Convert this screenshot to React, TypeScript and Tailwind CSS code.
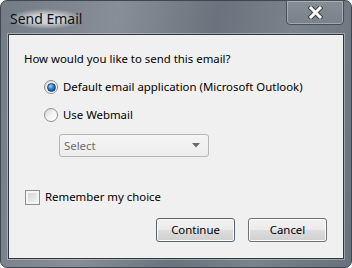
import { type ReactNode } from 'react';

const font = { fontFamily: '"Noto Sans", "Open Sans", sans-serif' };

function Radio({ checked }: { checked?: boolean }) {
  return (
    <span className="relative flex h-[14px] w-[14px] shrink-0 items-center justify-center rounded-full border border-[#8e8f8f] bg-gradient-to-br from-[#d6d6d6] via-[#f4f4f4] to-[#ffffff]">
      {checked && (
        <span className="h-[9px] w-[9px] rounded-full border border-[#1a3f6b] bg-[radial-gradient(circle_at_35%_30%,#9fd4ff_0%,#2a7fd0_45%,#0b3f80_100%)]" />
      )}
    </span>
  );
}

function Button({ children, primary }: { children: ReactNode; primary?: boolean }) {
  return (
    <button
      className={
        'flex h-[24px] w-[79px] items-center justify-center rounded-[3px] border text-black bg-[linear-gradient(to_bottom,#f2f2f2_0%,#ebebeb_48%,#dddddd_52%,#cfcfcf_100%)] shadow-[inset_0_0_0_1px_#fcfcfc] ' +
        (primary ? 'border-[#5a6470]' : 'border-[#707070]')
      }
    >
      {children}
    </button>
  );
}

export default function App() {
  return (
    <div
      className="flex h-[268px] w-[352px] flex-col rounded-[7px] border border-[#3f464e] bg-[linear-gradient(100deg,#737b85_0%,#878e97_30%,#6a737d_55%,#7a828b_75%,#68707a_100%)]"
      style={font}
    >
      <div className="flex h-[33px] shrink-0 items-start justify-between pl-[8px] pr-[7px]">
        <div className="mt-[8px] rounded-full bg-[radial-gradient(ellipse_at_center,rgba(235,238,240,0.75)_30%,rgba(235,238,240,0)_72%)] px-[1px] text-[14px] leading-[20px] text-[#111]">
          Send Email
        </div>
        <div className="-mt-[1px] flex h-[25px] w-[58px] items-center justify-center rounded-b-[4px] border border-[#474e56] bg-[linear-gradient(to_bottom,#858d96,#79818a)] shadow-[inset_0_0_0_1px_rgba(255,255,255,0.3)]">
          <svg width="15" height="13" viewBox="0 0 15 13">
            <path d="M3 2 L12 11 M12 2 L3 11" stroke="#3a3f45" strokeWidth="5" strokeLinecap="square" />
            <path d="M3 2 L12 11 M12 2 L3 11" stroke="#ffffff" strokeWidth="3" strokeLinecap="square" />
          </svg>
        </div>
      </div>
      <div className="mx-[7px] flex h-[225px] flex-col border border-[#30363c] bg-[#f0f0f0] shadow-[0_0_0_1px_rgba(255,255,255,0.35)] text-[11.4px] text-black">
        <div className="ml-[15px] mt-[16px] leading-[16px]">How would you like to send this email?</div>
        <div className="ml-[35px] mt-[12px] flex items-center gap-[5px] leading-[16px]">
          <Radio checked />
          <span>Default email application (Microsoft Outlook)</span>
        </div>
        <div className="ml-[35px] mt-[12px] flex items-center gap-[5px] leading-[16px]">
          <Radio />
          <span>Use Webmail</span>
        </div>
        <div className="ml-[50px] mt-[11px] flex h-[23px] w-[150px] items-center justify-between rounded-[3px] border border-[#b5b5b5] bg-[linear-gradient(to_bottom,#f4f4f4,#ededed)] pl-[4px] pr-[8px] text-[#6d6d6d]">
          <span>Select</span>
          <svg width="8" height="5" viewBox="0 0 8 5">
            <path d="M0 0 H8 L4 4.5 Z" fill="#6a6a6a" />
          </svg>
        </div>
        <div className="ml-[16px] mt-[32px] flex items-center gap-[5px] leading-[16px]">
          <span className="h-[15px] w-[15px] shrink-0 border border-[#8e8f8f] bg-[linear-gradient(135deg,#cfd0d2,#f7f7f7)] shadow-[inset_0_0_0_2px_#f4f4f4]" />
          <span>Remember my choice</span>
        </div>
        <div className="mr-[16px] mt-[13px] flex justify-end gap-[13px]">
          <Button primary>Continue</Button>
          <Button>Cancel</Button>
        </div>
      </div>
    </div>
  );
}
